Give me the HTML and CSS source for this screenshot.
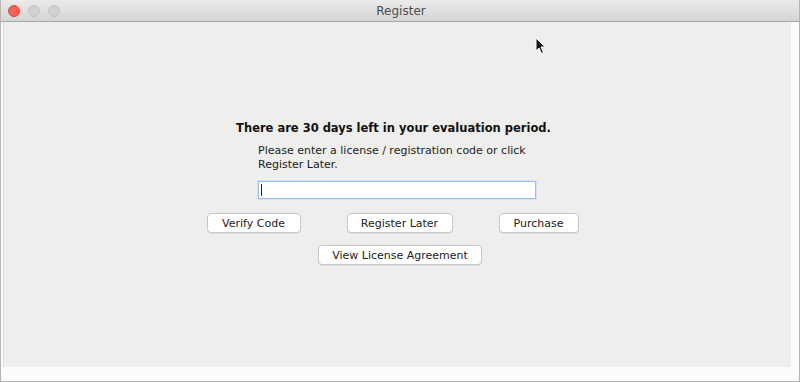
FILE: index.html
```html
<!DOCTYPE html>
<html lang="en">
<head>
    <meta charset="UTF-8">
    <meta name="viewport" content="width=device-width, initial-scale=1.0">
    <title>Register</title>
    <link rel="stylesheet" href="styles.css">
</head>
<body>
    <div class="window">
        <div class="titlebar">
            <div class="lights">
                <span class="light close"></span>
                <span class="light"></span>
                <span class="light"></span>
            </div>
            <div class="title">Register</div>
        </div>

        <div class="frame">
            <div class="panel">
                <div class="dialog">
                    <h1 class="heading">There are 30 days left in your evaluation period.</h1>
                    <div class="form">
                        <p class="hint">Please enter a license / registration code or click<br>Register Later.</p>
                        <div class="code-field"><span class="caret"></span></div>
                    </div>
                    <div class="button-row">
                        <button class="button verify">Verify Code</button>
                        <button class="button later">Register Later</button>
                        <button class="button purchase">Purchase</button>
                    </div>
                    <button class="button license">View License Agreement</button>
                </div>
            </div>
            <div class="side-strip"></div>
        </div>
        <div class="bottom-strip"></div>

        <svg class="cursor" width="12" height="18" viewBox="0 0 12 18">
            <path d="M1 1 L1 14 L4 11 L6.5 16.5 L8.5 15.5 L6 10 L10 10 Z" fill="#111" stroke="#fff" stroke-width="1"/>
        </svg>
    </div>
</body>
</html>
```

FILE: styles.css
```css
* {
    box-sizing: border-box;
}
body {
    margin: 0;
    font-family: "DejaVu Sans", "Liberation Sans", sans-serif;
    color: #222;
}
.window {
    position: relative;
    width: 800px;
    height: 382px;
    display: flex;
    flex-direction: column;
    background-color: #fbfbfb;
    border: 1px solid #b5b5b5;
    border-top: none;
    overflow: hidden;
}
.titlebar {
    position: relative;
    height: 22px;
    flex: none;
    background: linear-gradient(#ebebeb, #d5d5d5);
    border-bottom: 1px solid #a8a8a8;
    display: flex;
    align-items: center;
    justify-content: center;
}
.lights {
    position: absolute;
    left: 7px;
    top: 5px;
    display: flex;
    gap: 8px;
}
.light {
    width: 12px;
    height: 12px;
    border-radius: 50%;
    background-color: #d1d1d1;
    border: 1px solid #c4c4c4;
}
.light.close {
    background-color: #fc5f57;
    border-color: #e0443e;
}
.title {
    font-size: 12px;
    color: #4d4d4d;
    margin-left: 2px;
}
.frame {
    flex: 1;
    display: flex;
    padding-left: 2px;
}
.panel {
    flex: 1;
    background-color: #eeeeec;
    border-left: 1px solid #dcdcdc;
    display: flex;
    justify-content: center;
    padding-top: 99px;
    padding-left: 2px;
}
.side-strip {
    width: 8px;
    background-color: #fcfcfc;
}
.bottom-strip {
    height: 14px;
    flex: none;
    background-color: #fbfbfb;
}
.dialog {
    display: flex;
    flex-direction: column;
    align-items: center;
}
.heading {
    margin: 0;
    font-size: 11.5px;
    line-height: 14px;
    font-weight: bold;
    color: #111;
    margin-left: -10px;
}
.form {
    width: 278px;
    margin-top: 9px;
    margin-left: -3px;
}
.hint {
    margin: 0;
    font-size: 11px;
    line-height: 14px;
    color: #222;
}
.code-field {
    margin-top: 9px;
    height: 18px;
    background-color: #fff;
    border: 1px solid #9dbde4;
    box-shadow: 0 0 0 1px #d3e2f4;
    padding: 2px 2px;
}
.caret {
    display: block;
    width: 1px;
    height: 12px;
    background-color: #222;
}
.button-row {
    display: flex;
    gap: 46px;
    margin-top: 14px;
    margin-left: -12px;
}
.button {
    font-family: inherit;
    font-size: 11px;
    color: #222;
    height: 20px;
    padding: 0 10px;
    background-color: #fff;
    border: 1px solid #c6c6c6;
    border-radius: 4px;
    box-shadow: 0 1px 0 rgba(0,0,0,0.06);
}
.verify {
    width: 94px;
}
.later {
    width: 106px;
}
.purchase {
    width: 80px;
}
.license {
    width: 164px;
    margin-top: 12px;
    margin-left: 3px;
}
.cursor {
    position: absolute;
    left: 534px;
    top: 37px;
}
```
